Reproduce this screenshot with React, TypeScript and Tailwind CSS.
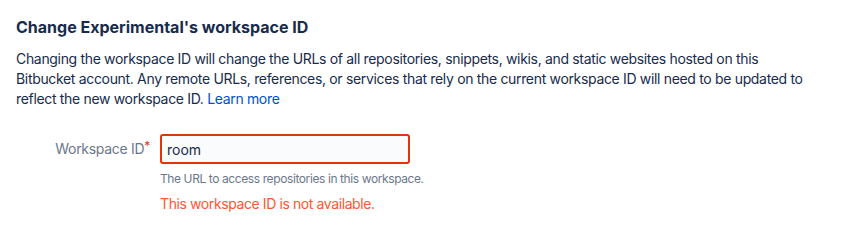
import { useState } from "react";

const App = () => {
  const [workspaceId, setWorkspaceId] = useState("room");

  return (
    <div className="bg-white w-[848px] h-[225px] px-4 pt-[17px] font-['Inter','Noto_Sans',sans-serif] text-[#172b4d]">
      <h2 className="text-base leading-5 font-bold">Change Experimental's workspace ID</h2>

      <p className="mt-3 text-sm leading-5 tracking-[-0.33px] whitespace-nowrap">
        <span className="block">
          Changing the workspace ID will change the URLs of all repositories, snippets, wikis, and static websites hosted on this
        </span>
        <span className="block">
          Bitbucket account. Any remote URLs, references, or services that rely on the current workspace ID will need to be updated to
        </span>
        <span className="block">
          reflect the new workspace ID.{" "}
          <a href="#" className="text-[#0052cc]">
            Learn more
          </a>
        </span>
      </p>

      {/* form row */}
      <div className="mt-[25px] flex">
        <label className="w-[134px] h-[30px] flex items-center justify-end text-sm tracking-[-0.3px] text-[#6b778c]">
          Workspace ID<span className="text-[#de350b] self-start mt-[4px] text-xs">*</span>
        </label>
        <div className="ml-[10px] flex flex-col">
          <input
            value={workspaceId}
            onChange={(e) => setWorkspaceId(e.target.value)}
            className="w-[250px] h-[30px] rounded-[3px] border-2 border-[#de350b] bg-[#fafbfc] px-[5px] text-sm text-[#172b4d] outline-none"
          />
          <div className="mt-[7px] text-xs leading-4 tracking-[-0.4px] text-[#6b778c]">
            The URL to access repositories in this workspace.
          </div>
          <div className="mt-[7px] text-sm leading-5 tracking-[-0.4px] text-[#ff5630]">This workspace ID is not available.</div>
        </div>
      </div>
    </div>
  );
};

export default App;
